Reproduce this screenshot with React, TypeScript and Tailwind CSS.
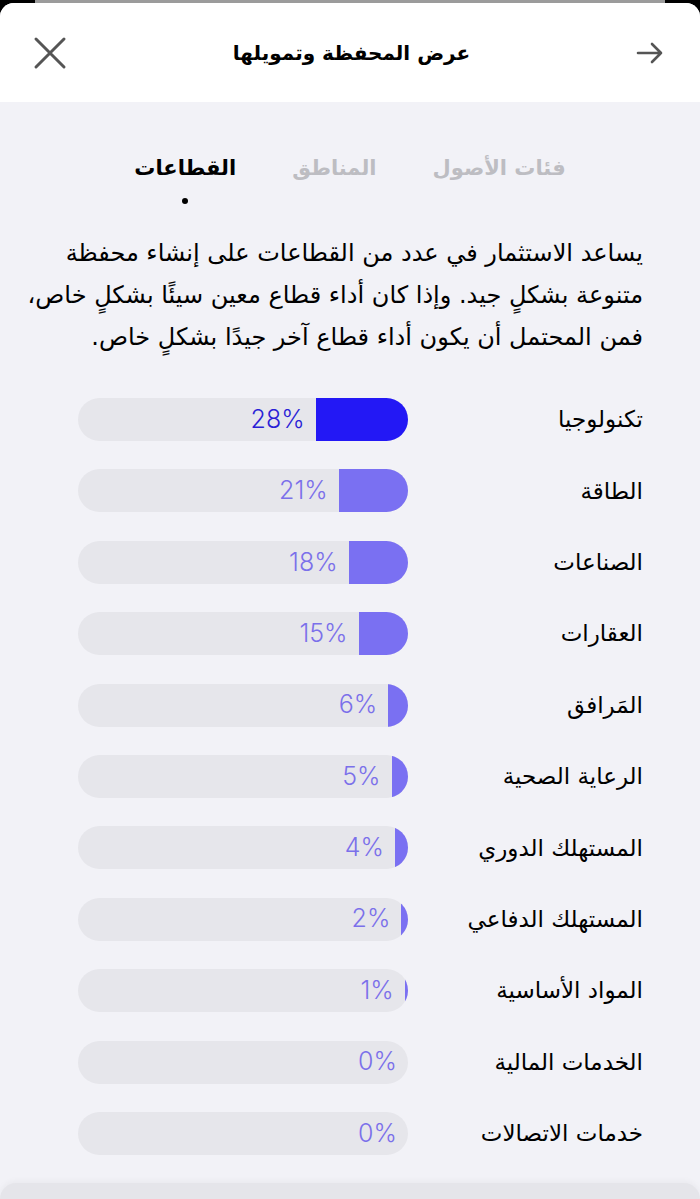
import React from "react";

const rows: { label: string; pct: number }[] = [
  { label: "تكنولوجيا", pct: 28 },
  { label: "الطاقة", pct: 21 },
  { label: "الصناعات", pct: 18 },
  { label: "العقارات", pct: 15 },
  { label: "المَرافق", pct: 6 },
  { label: "الرعاية الصحية", pct: 5 },
  { label: "المستهلك الدوري", pct: 4 },
  { label: "المستهلك الدفاعي", pct: 2 },
  { label: "المواد الأساسية", pct: 1 },
  { label: "الخدمات المالية", pct: 0 },
  { label: "خدمات الاتصالات", pct: 0 },
];

const arabic = { fontFamily: '"DejaVu Sans", "Noto Sans", sans-serif' };
const latin = { fontFamily: 'Inter, "Liberation Sans", sans-serif' };

export default function App() {
  return (
    <div className="w-[700px] h-[1199px] bg-black overflow-hidden flex flex-col">
      <div className="h-[3px] shrink-0 px-[35px]">
        <div className="h-full bg-[#9b9b9b]" />
      </div>
      <div className="flex-1 flex flex-col rounded-t-[14px] overflow-hidden bg-[#f2f2f7]">
        <header className="h-[99px] shrink-0 bg-white flex items-center justify-between pl-[33px] pr-[36px]">
          <svg width="34" height="34" viewBox="0 0 34 34" className="text-[#555]">
            <path d="M3 3 L31 31 M31 3 L3 31" stroke="currentColor" strokeWidth="3" strokeLinecap="round" />
          </svg>
          <div className="text-[20px] font-bold text-black" dir="rtl" style={arabic}>
            عرض المحفظة وتمويلها
          </div>
          <svg width="28" height="22" viewBox="0 0 28 22" className="text-[#555]">
            <path d="M2 11 H25 M16 2 L25 11 L16 20" stroke="currentColor" strokeWidth="2.6" fill="none" strokeLinecap="round" strokeLinejoin="round" />
          </svg>
        </header>
        <div className="flex-1 flex flex-col" dir="rtl">
          <div className="flex justify-center gap-[56px] pt-[50px] h-[110px] shrink-0" style={arabic}>
            <span className="text-[21px] font-bold text-[#bdbdc2] leading-[32px]">فئات الأصول</span>
            <span className="text-[21px] font-bold text-[#bdbdc2] leading-[32px]">المناطق</span>
            <div className="flex flex-col items-center">
              <span className="text-[21px] font-bold text-black leading-[32px]">القطاعات</span>
              <span className="mt-[14px] w-[6px] h-[6px] rounded-full bg-black" />
            </div>
          </div>
          <p className="mt-[20px] pr-[57px] text-[24px] leading-[42px] text-black whitespace-nowrap" style={arabic}>
            يساعد الاستثمار في عدد من القطاعات على إنشاء محفظة
            <br />
            متنوعة بشكلٍ جيد. وإذا كان أداء قطاع معين سيئًا بشكلٍ خاص،
            <br />
            فمن المحتمل أن يكون أداء قطاع آخر جيدًا بشكلٍ خاص.
          </p>
          <div className="flex flex-col gap-[28.4px] mt-[40px] pr-[57px] pl-[78px]">
            {rows.map((r, i) => (
              <div key={i} className="flex items-center justify-between h-[43px]">
                <span className="text-[23px] text-black" style={arabic}>{r.label}</span>
                <div className="w-[330px] h-[43px] rounded-full bg-[#e6e6eb] overflow-hidden flex items-center">
                  <div
                    className={"h-full shrink-0 " + (i === 0 ? "bg-[#2318f5]" : "bg-[#7a70f2]")}
                    style={{ width: `${(r.pct / 100) * 330}px` }}
                  />
                  <span
                    className={"mr-[11px] text-[25px] font-light " + (i === 0 ? "text-[#2a1fd6]" : "text-[#7b70ea]")}
                    style={latin}
                    dir="ltr"
                  >
                    {r.pct}%
                  </span>
                </div>
              </div>
            ))}
          </div>
          <div className="flex-1" />
          <div className="h-[16px] shrink-0 rounded-t-[16px] bg-[#e5e5ea] shadow-[0_-2px_6px_rgba(0,0,0,0.04)]" />
        </div>
      </div>
    </div>
  );
}
